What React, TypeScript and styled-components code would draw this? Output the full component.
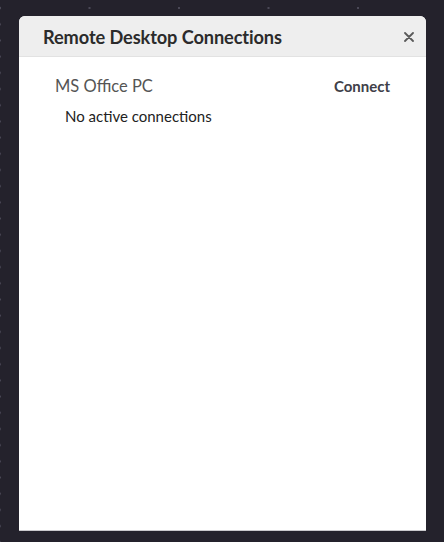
import React from "react";
import styled, { createGlobalStyle } from "styled-components";

const Global = createGlobalStyle`
  html, body { margin: 0; padding: 0; }
  body {
    width: 444px;
    height: 542px;
    overflow: hidden;
    background-color: #24222c;
    background-image:
      radial-gradient(circle, #4a4856 0.9px, transparent 1.2px),
      radial-gradient(circle, #4a4856 0.9px, transparent 1.2px);
    background-size: 89.5px 16px, 4px 16.2px;
    background-position: -44.75px 0px, -2px 0px;
    background-repeat: repeat-x, repeat-y;
    font-family: "Lato", "Open Sans", sans-serif;
  }
`;

const Stage = styled.div`
  padding: 16px 18px 0 19px;
`;

const Dialog = styled.div`
  width: 407px;
  height: 514px;
  background: #ffffff;
  border-radius: 6px 6px 0 0;
  border-bottom: 1px solid #c9c9cc;
  display: flex;
  flex-direction: column;
  overflow: hidden;
`;

const Header = styled.div`
  height: 41px;
  background: #eeeeee;
  border-bottom: 1px solid #e2e2e2;
  display: flex;
  align-items: center;
  justify-content: space-between;
  padding: 1px 10px 0 24px;
  box-sizing: border-box;
`;

const Title = styled.h1`
  margin: 0;
  font-size: 18.2px;
  font-weight: 700;
  color: #2b2b2b;
  letter-spacing: -0.1px;
`;

const Close = styled.button`
  border: none;
  background: none;
  padding: 0;
  width: 14px;
  height: 14px;
  display: flex;
  align-items: center;
  justify-content: center;
  cursor: pointer;
`;

const Body = styled.div`
  padding: 19px 36px 0 36px;
  display: flex;
  flex-direction: column;
`;

const Row = styled.div`
  display: flex;
  align-items: baseline;
  justify-content: space-between;
  height: 24px;
`;

const Name = styled.span`
  font-size: 16.5px;
  color: #555555;
`;

const ConnectButton = styled.button`
  border: none;
  background: none;
  padding: 0;
  font-family: inherit;
  font-size: 15px;
  font-weight: 700;
  color: #404048;
  cursor: pointer;
`;

const Status = styled.div`
  margin-top: 7px;
  padding-left: 10px;
  font-size: 15px;
  color: #222222;
`;

export default function App() {
  return (
    <>
      <Global />
      <Stage>
        <Dialog>
          <Header>
            <Title>Remote Desktop Connections</Title>
            <Close aria-label="Close">
              <svg width="10" height="10" viewBox="0 0 10 10">
                <path d="M1 1L9 9M9 1L1 9" stroke="#5a5a5a" strokeWidth="1.8" strokeLinecap="round" />
              </svg>
            </Close>
          </Header>
          <Body>
            <Row>
              <Name>MS Office PC</Name>
              <ConnectButton>Connect</ConnectButton>
            </Row>
            <Status>No active connections</Status>
          </Body>
        </Dialog>
      </Stage>
    </>
  );
}
